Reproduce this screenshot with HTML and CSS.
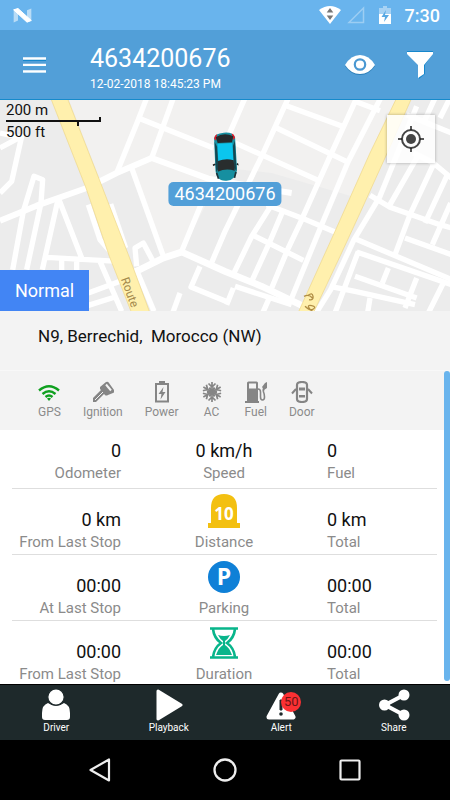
FILE: index.html
```html
<!DOCTYPE html>
<html lang="en">
<head>
<meta charset="utf-8">
<meta name="viewport" content="width=device-width, initial-scale=1">
<title>Vehicle 4634200676</title>
<link rel="stylesheet" href="styles.css">
</head>
<body>
<div class="app">
  <div class="status">
    <svg class="status-logo" viewBox="0 0 57 44" width="19" height="15" aria-hidden="true"><path d="M2 5l13-4v36L2 43zM42 6l13-5v36l-13 5z" fill="#b9dcf6"/><path d="M2 5l13-4 40 36-13 5z" fill="#fff" stroke="#fff" stroke-width="3" stroke-linejoin="round"/></svg>
    <div class="status-right">
      <svg viewBox="0 0 22 18" width="22" height="18" aria-hidden="true"><path d="M0 4Q11-4 22 4L11 18z" fill="#fff"/><path d="M11 2l3.300 4.500H7.700zM11 14l3.300-4.500H7.700z" fill="#777"/></svg>
      <svg class="signal" viewBox="0 0 18 18" width="18" height="18" aria-hidden="true"><path d="M16.500 2v14.500H2z" fill="none" stroke="#9ccdf3" stroke-width="1.500"/></svg>
      <svg class="battery" viewBox="0 0 12 18" width="12" height="18" aria-hidden="true"><path d="M4 0h4v2h4v7H0V2h4z" fill="#a6d2f4"/><path d="M0 8h12v10H0z" fill="#fff"/><path d="M7 4L2.500 11H6l-1 5 5-7H6z" fill="#58a9e3"/></svg>
      <span>7:30</span>
    </div>
  </div>

  <header class="header">
    <button class="icon-button" aria-label="Menu"><svg viewBox="0 0 24 18" width="24" height="18"><path d="M0 4h23M0 10h23M0 16h23" stroke="#1687cc" stroke-width="2"/><path d="M0 2.500h23M0 9h23M0 15.500h23" stroke="#fff" stroke-width="2.500"/></svg></button>
    <div class="heading">
      <h1>4634200676</h1>
      <p>12-02-2018 18:45:23 PM</p>
    </div>
    <button class="icon-button" aria-label="Watch"><svg viewBox="0 0 32 22" width="32" height="22"><path d="M1 12Q7 2 16 2t15 10Q25 21 16 21T1 12z" fill="#2b7fb9"/><path d="M1 11Q7 1 16 1t15 10Q25 20 16 20T1 11z" fill="#fff"/><circle cx="16" cy="10.500" r="5.200" fill="none" stroke="#4a98d2" stroke-width="2.200"/></svg></button>
    <button class="icon-button filter" aria-label="Filter"><svg viewBox="0 0 28 28" width="28" height="28"><path d="M1 0h26v2l-8 12v9l-6 5V14L1 2z" fill="#1687cc"/><path d="M1 1h26v2l-9 11v9l-6 4V14L1 3z" fill="#fff"/></svg></button>
  </header>

  <section class="map" aria-label="Map">
    <svg class="map-canvas" viewBox="0 6 1350 633" preserveAspectRatio="xMidYMid slice" aria-hidden="true">
      <path fill="#ececec" d="M0 0h1350v640H0z"/>
      <path fill="#f2f1f0" d="M205 0l95 245 100-35 92 270 53-20 130-250 140 15 240 70L1190 0z"/>
      <g fill="none" stroke="#fff" stroke-width="16" stroke-linejoin="round">
        <path stroke-width="18" d="M0 368l110-45 150-53 90-45 105-45 170 62 200 35 50 8"/>
        <path d="M440 0l-27 70-63 155M520 0l-65 180M415 60l225 90M395 210l97 270"/>
        <path stroke-width="20" d="M405 522l85-42 55-18 130 58 110 45 130 62"/>
        <path d="M545 460l60-145M865 0l-80 175-110 225-45 105M600 505l-27 62 110 45M735 0l-48 110"/>
        <path d="M695 130l255 115M855 22l170 62M830 90l215 103M800 320l110 42 95 40M1070 0l-80 175-85 190"/>
        <path d="M1142 0l-97 190-80 190-90 220M1065 10l75 28"/>
        <path d="M815 320l-60 95-58 120M850 335l-40 95-55 120M910 355l-45 95-50 120M760 412l150 75M700 570l-20 50M705 565l170 55M810 595l-22 50"/>
        <path d="M0 105l55 12M0 150l65-35-30 135-35 35M38 515l32-175 32-105 26 10-5 70-43 200M175 300l-48 215M175 300l70 180M140 478l215 12M185 480v40M230 485v40M300 490l65 150M265 585l140-52M265 622l80-25"/>
        <path d="M265 320l35 105 30 35M332 318l45 132M407 510l55 130M410 505l-5-55 25-15 32 60M540 585l-22 60"/>
        <path d="M1250 25l-110 270-78 130-70 150-50 80"/>
        <path d="M1110 292l60 36 150 52 35 10M1060 420l295 125M1250 180l-80 140M1300 200l-70 150-45 120M1340 235l-65 140M1352 315l-55 125M1215 420l140 50M1240 165l60 30 60 50"/>
        <path d="M1075 460l-70 185M1070 462l290 100M1165 510l-18 45M1065 535l185 65M1250 540l-35 90M990 565l75 15 180 40M1330 555l-45 90M1110 600l-8 50M1220 50l135 55M1275 65l30-65M1320 60l30-60"/>
      </g>
      <path fill="#fff0ad" stroke="#eed687" stroke-width="2" d="M152 0h50l98 250 85 220 65 175h-55l-67-170-70-205z"/>
      <path fill="#fff0ad" stroke="#eed687" stroke-width="2" d="M1190 0h45l-62 140-93 205-60 130-80 170h-46l111-245 105-235z"/>
      <text class="road" transform="translate(362 543) rotate(70)">Route</text>
      <g fill="none" stroke="#b18e45" stroke-width="4"><path d="M912 595q15-8 25 5M925 592q12-10 14 3t-12 10M915 625q15 15 25 8t-5-10-7 8 8 5"/></g>
    </svg>
    <div class="scale">
      <span>200 m</span>
      <svg viewBox="0 0 97 10" width="97" height="10" aria-hidden="true"><path d="M0 5h94V1M72 5v5" fill="none" stroke="#111" stroke-width="2"/></svg>
      <span>500 ft</span>
    </div>
    <button class="locate" aria-label="My location"><svg viewBox="0 0 28 28" width="28" height="28"><circle cx="14" cy="14" r="9" fill="none" stroke="#444" stroke-width="2"/><circle cx="14" cy="14" r="5" fill="#444"/><path d="M14 1v4M14 23v4M1 14h4M23 14h4" stroke="#222" stroke-width="1.500"/></svg></button>
    <div class="marker">
      <svg viewBox="0 0 78 150" width="26" height="50" aria-hidden="true"><g transform="rotate(-3 39 75)"><path d="M8 18Q10 3 38 2t33 16l1 90q0 37-33 38T7 108z" fill="#168fa0"/><path d="M8 18q2-10 10-13l-5 20zM71 18q-2-10-10-13l5 20z" fill="#e51b2a"/><path d="M13 14q25-14 53 0l-5 18H18z" fill="#25292b"/><path d="M9 28l7 16v65l-7 10zM70 28l-7 16v65l7 10z" fill="#164650"/><path d="M17 34h45v52H17z" fill="#0bc6ee"/><path d="M16 86q24-8 47 0l2 32q-26-10-51 0z" fill="#292d2e"/><path d="M0 98l8-3M72 97l7 4" stroke="#222" stroke-width="5"/><path d="M10 121l5 18M68 121l-5 18" stroke="#1d3339" stroke-width="5"/></g></svg>
      <span>4634200676</span>
    </div>
    <button class="map-type">Normal</button>
  </section>

  <p class="address">N9, Berrechid,&nbsp; Morocco (NW)</p>

  <main class="details">
    <ul class="sensors">
      <li><svg viewBox="0 0 22 22" width="22" height="22"><g fill="none" stroke="#0fa01f" stroke-width="2.400"><path d="M1 9.500Q11 1 21 9.500M4.500 13Q11 7.500 17.500 13M7.500 16Q11 13 14.500 16"/></g><path d="M9 17.500q2-1.500 4 0l-2 2.500z" fill="#0fa01f"/></svg>GPS</li>
      <li><svg viewBox="0 0 22 22" width="22" height="22"><path d="M8 6l6-5q2-1 3 1l5 7q1 2-1 3l-5 2q-2 1-3 0l-1-1-8 8H1v-4l8-8-1-1z" fill="#858585"/><path d="M14 3.500l5 6" stroke="#f3f3f3" stroke-width="2"/><path d="M3 19l8-8" stroke="#f3f3f3" stroke-width="1"/></svg>Ignition</li>
      <li><svg viewBox="0 0 22 22" width="22" height="22"><path d="M8 0h6v3H8z" fill="#858585"/><path d="M5 3h12v17.500H5z" fill="none" stroke="#858585" stroke-width="2"/><path d="M12.500 6L7.500 13h3l-1 5.500 5-7.500h-3z" fill="#858585"/></svg>Power</li>
      <li><svg viewBox="0 0 22 22" width="22" height="22"><g fill="none" stroke="#858585" stroke-width="1.700"><path id="flake" d="M11 11V1M7.500 2.500L11 6l3.500-3.500M8 7l3 3 3-3"/><use href="#flake" transform="rotate(60 11 11)"/><use href="#flake" transform="rotate(120 11 11)"/><use href="#flake" transform="rotate(180 11 11)"/><use href="#flake" transform="rotate(240 11 11)"/><use href="#flake" transform="rotate(300 11 11)"/></g></svg>AC</li>
      <li><svg viewBox="0 0 22 22" width="22" height="22"><path d="M2 2q0-1.500 1.500-1.500h8Q13 .5 13 2v18h1v2H0v-2h2zm2 .5v5h7v-5z" fill="#858585" fill-rule="evenodd"/><path d="M13 8q2.500 0 2.500 3v5q0 3 2 3t2-3-1-5q-1-3 1.500-5.500" fill="none" stroke="#858585" stroke-width="1.600"/><path d="M17 6l3-4 2-1v6l-3 2z" fill="#858585"/></svg>Fuel</li>
      <li><svg viewBox="0 0 22 22" width="22" height="22"><path d="M6 4q0-3 5-3t5 3v14q0 3-5 3t-5-3z" fill="none" stroke="#858585" stroke-width="2.200"/><path d="M8 6.500h6v3H8zM8 14h6v2.500H8z" fill="#858585"/><path d="M5 8l-4 4.500M17 8l4 4.500" stroke="#858585" stroke-width="2"/></svg>Door</li>
    </ul>

    <div class="stats">
      <div class="row row-first">
        <div class="cell"><b>0</b><span>Odometer</span></div>
        <div class="cell"><b>0 km/h</b><span>Speed</span></div>
        <div class="cell"><b>0</b><span>Fuel</span></div>
      </div>
      <div class="row">
        <div class="cell"><b>0 km</b><span>From Last Stop</span></div>
        <div class="cell"><svg viewBox="0 0 34 34" width="34" height="34" role="img" aria-label="10"><path d="M4 29V14Q4 0 17 0t13 14v15h3v5H1v-5z" fill="#f3c011"/><text class="milestone" x="17" y="26">10</text></svg><span>Distance</span></div>
        <div class="cell"><b>0 km</b><span>Total</span></div>
      </div>
      <div class="row">
        <div class="cell"><b>00:00</b><span>At Last Stop</span></div>
        <div class="cell"><svg viewBox="0 0 34 34" width="34" height="34" role="img" aria-label="P"><circle cx="17" cy="17" r="16" fill="#0f80d7"/><text class="parking" x="17" y="25">P</text></svg><span>Parking</span></div>
        <div class="cell"><b>00:00</b><span>Total</span></div>
      </div>
      <div class="row">
        <div class="cell"><b>00:00</b><span>From Last Stop</span></div>
        <div class="cell"><svg viewBox="0 0 34 34" width="34" height="34" aria-hidden="true"><g fill="none" stroke="#08b58b" stroke-width="2.600"><path d="M3 2.500h28M3 31.500h28"/><path d="M6 3q1 9 8 14-7 5-8 14M28 3q-1 9-8 14 7 5 8 14"/></g><path d="M11 9q6 2 12 0-2 4-5 6v4q4 2 7 10H9q3-8 7-10v-4q-3-2-5-6z" fill="#08b58b"/></svg><span>Duration</span></div>
        <div class="cell"><b>00:00</b><span>Total</span></div>
      </div>
    </div>
    <div class="scrollbar"></div>
  </main>

  <nav class="tabs">
    <button><svg viewBox="0 0 32 32" width="32" height="32"><path d="M8 14q8 6 16 0 6 2 6 10v4q0 3-3 3H5q-3 0-3-3v-4q0-8 6-10z" fill="#fff"/><circle cx="16" cy="8" r="8.200" fill="#fff" stroke="#1e292b" stroke-width="1.200"/></svg>Driver</button>
    <button><svg viewBox="0 0 32 32" width="32" height="32"><path d="M5 2l23 14L5 30z" fill="#fff" stroke="#fff" stroke-width="3" stroke-linejoin="round"/></svg>Playback</button>
    <button><span class="alert-icon"><svg viewBox="0 0 32 32" width="32" height="32"><path d="M16 6l12 22H4z" fill="#fff" stroke="#fff" stroke-width="5" stroke-linejoin="round"/><path d="M15 11h2v10h-2z" fill="#1e292b" stroke="#1e292b"/><circle cx="16" cy="25" r="1.800" fill="#1e292b"/></svg><span class="badge">50</span></span>Alert</button>
    <button><svg viewBox="0 0 32 32" width="32" height="32"><path d="M26 6L7 16l19 10" fill="none" stroke="#fff" stroke-width="4"/><circle cx="26" cy="6" r="5.500" fill="#fff"/><circle cx="6.500" cy="16" r="5.500" fill="#fff"/><circle cx="26" cy="26" r="5.500" fill="#fff"/></svg>Share</button>
  </nav>

  <nav class="system" aria-label="System">
    <button aria-label="Back"><svg viewBox="0 0 24 24" width="24" height="24"><path d="M21 1.500v21L2.500 12z" fill="none" stroke="#eee" stroke-width="2.200" stroke-linejoin="round"/></svg></button>
    <button aria-label="Home"><svg viewBox="0 0 24 24" width="24" height="24"><circle cx="12" cy="12" r="10.500" fill="none" stroke="#eee" stroke-width="2.300"/></svg></button>
    <button aria-label="Recent apps"><svg viewBox="0 0 24 24" width="24" height="24"><rect x="2.500" y="2.500" width="19" height="19" rx="1" fill="none" stroke="#eee" stroke-width="2.200"/></svg></button>
  </nav>
</div>
</body>
</html>
```

FILE: styles.css
```css
* {
  box-sizing: border-box;
}

body,
h1,
p,
ul {
  margin: 0;
  padding: 0;
}

body {
  font-family: Roboto, "Liberation Sans", sans-serif;
  color: #111;
  background: #fff;
}

button {
  border: 0;
  padding: 0;
  background: none;
  font-family: inherit;
  color: inherit;
  cursor: pointer;
}

svg {
  display: block;
  flex: none;
}

.app {
  display: flex;
  flex-direction: column;
  min-height: 100vh;
}

.status {
  display: flex;
  align-items: center;
  justify-content: space-between;
  height: 30px;
  padding: 0 10px 0 13px;
  background: #69b4ed;
  color: #fff;
}

.status-right {
  display: flex;
  align-items: center;
  gap: 6px;
  font-size: 18px;
  font-weight: 500;
}

.battery {
  margin: 0 8px;
}

.header {
  display: flex;
  align-items: center;
  height: 70px;
  padding: 0 16px 0 23px;
  background: #529fd8;
  border-bottom: 1px solid #168acb;
  color: #fff;
}

.icon-button {
  flex: none;
}

.heading {
  flex: 1;
  margin-left: 43px;
  padding-top: 8px;
}

.heading h1 {
  font-size: 25px;
  font-weight: 400;
  line-height: 30px;
}

.heading p {
  font-size: 12px;
  line-height: 20px;
}

.filter {
  margin-left: 30px;
}

.map {
  position: relative;
  flex: 1;
  min-height: 210px;
  overflow: hidden;
}

.map-canvas {
  position: absolute;
  width: 100%;
  height: 100%;
}

.road {
  font-size: 36px;
  fill: #a58a4c;
}

.scale {
  position: absolute;
  top: 2px;
  left: 6px;
  font-size: 15px;
  line-height: 17px;
}

.scale span {
  display: block;
}

.scale svg {
  margin: -3px 0 -2px;
}

.locate {
  position: absolute;
  top: 15px;
  right: 15px;
  display: grid;
  place-items: center;
  width: 48px;
  height: 48px;
  background: rgba(255, 255, 255, 0.85);
  box-shadow: 0 0 3px rgba(0, 0, 0, 0.3);
}

.marker {
  position: absolute;
  top: 32px;
  left: 50%;
  display: flex;
  flex-direction: column;
  align-items: center;
  transform: translateX(-50%);
}

.marker span {
  padding: 0 6px;
  border-radius: 5px;
  background: #529fd8;
  color: #fff;
  font-size: 18px;
  line-height: 24px;
}

.map-type {
  position: absolute;
  bottom: 0;
  left: 0;
  padding: 0 15px;
  background: #4285f4;
  color: #fff;
  font-size: 18px;
  line-height: 41px;
}

.address {
  height: 60px;
  padding: 13px 38px;
  background: #f3f3f3;
  border-bottom: 1px solid #f8f8f8;
  font-size: 17px;
  line-height: 24px;
}

.details {
  position: relative;
}

.sensors {
  display: flex;
  gap: 22px;
  height: 59px;
  padding: 10px 38px 0;
  background: #f3f3f3;
  list-style: none;
}

.sensors li {
  display: flex;
  flex-direction: column;
  align-items: center;
  color: #8b8b8b;
  font-size: 12px;
  line-height: 18px;
}

.stats {
  padding: 0 13px 0 12px;
}

.row {
  display: grid;
  grid-template-columns: 109fr 206fr 110fr;
  align-items: end;
  padding: 5px 0 2px;
  border-bottom: 1px solid #dedede;
}

.row-first {
  padding: 9px 0 5px;
}

.row:last-child {
  padding-bottom: 0;
  border-bottom: 0;
}

.cell {
  display: flex;
  flex-direction: column;
  align-items: center;
  white-space: nowrap;
}

.cell:first-child {
  align-items: flex-end;
}

.cell:last-child {
  align-items: flex-start;
}

.cell svg {
  margin-bottom: 4px;
}

.cell b {
  font-size: 18px;
  font-weight: 400;
  line-height: 24px;
}

.cell span {
  color: #8b8b8b;
  font-size: 15px;
  line-height: 20px;
}

.milestone {
  font-family: "Open Sans", sans-serif;
  font-size: 17px;
  font-weight: 700;
  fill: #fff;
  text-anchor: middle;
}

.parking {
  font-family: "Open Sans", sans-serif;
  font-size: 23px;
  font-weight: 700;
  fill: #fff;
  text-anchor: middle;
}

.scrollbar {
  position: absolute;
  top: 0;
  right: 0;
  bottom: 3px;
  width: 6px;
  border-radius: 3px;
  background: #69b4ed;
}

.tabs {
  display: flex;
  height: 56px;
  background: #1e292b;
  border-top: 1px solid #000;
  color: #fff;
}

.tabs button {
  flex: 1;
  display: flex;
  flex-direction: column;
  align-items: center;
  padding-top: 4px;
  font-size: 10px;
  line-height: 14px;
}

.alert-icon {
  position: relative;
}

.badge {
  position: absolute;
  top: 3px;
  right: -4px;
  width: 20px;
  border-radius: 50%;
  background: #fb3033;
  color: #6b1515;
  font-size: 13px;
  line-height: 20px;
}

.system {
  display: flex;
  height: 60px;
  padding: 0 38px;
  background: #000;
}

.system button {
  flex: 1;
  display: grid;
  place-items: center;
}
```
